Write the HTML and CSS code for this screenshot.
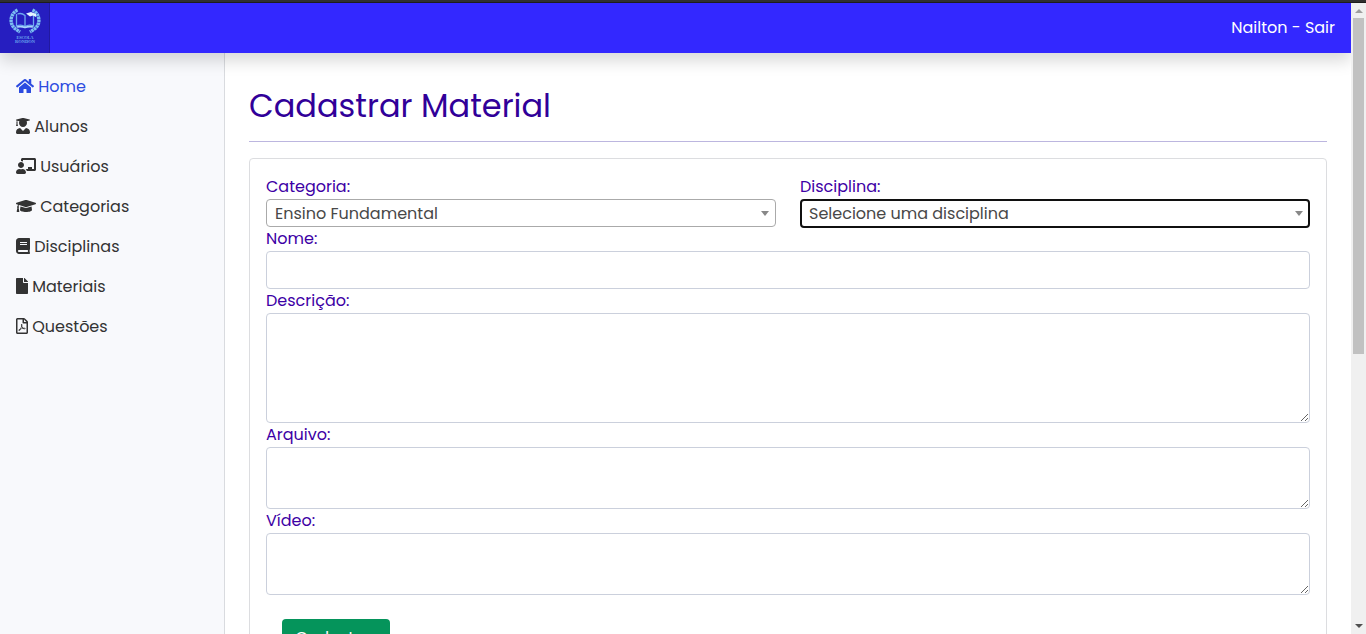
FILE: index.html
```html
<!DOCTYPE html>
<html lang="pt-BR">
<head>
<meta charset="utf-8">
<title>Cadastrar Material</title>
<link rel="stylesheet" href="styles.css">
</head>
<body>
<div class="page">
  <div class="window-edge"></div>
  <div class="app">
    <header class="navbar">
      <div class="brand">
        <svg width="34" height="37" viewBox="0 0 34 37">
          <g fill="none" stroke="#7cc0f2" stroke-width="3.400" stroke-dasharray="2.500 .5">
            <path d="M9.500 4C3 7 0 17 7.500 23L12 26"/>
            <path d="M24.500 4C31 7 34 17 26.500 23L22 26"/>
          </g>
          <path d="M8.500 8v12q5-2 8.500 .8q3.500-2.800 8.500-.8V8M17 9V20M9.500 8q4-1.500 7.500 1.500" fill="none" stroke="#6ea9ef" stroke-width="1.300"/>
          <path d="M9 21q4-1 8 .5q4-1.500 8-.5" fill="none" stroke="#a8d5fb" stroke-width="1.800"/>
          <path d="M18 7.500l5-1.500 5 2v3l-3-1.500-3 1z" fill="#e4f5ff"/>
          <text class="brand-text" x="17" y="33" text-anchor="middle" textLength="17">ESCOLA</text>
          <text class="brand-text" x="17" y="37" text-anchor="middle" textLength="20">RONDON</text>
        </svg>
      </div>
      <a class="account">Nailton - Sair</a>
    </header>
    <div class="columns">
      <nav class="sidebar">
        <a class="item active"><svg width="18" height="16" viewBox="0 0 576 512"><path d="M280.37 148.26L96 300.11V464a16 16 0 0 0 16 16l112.06-.29a16 16 0 0 0 15.92-16V368a16 16 0 0 1 16-16h64a16 16 0 0 1 16 16v95.64a16 16 0 0 0 16 16.05L464 480a16 16 0 0 0 16-16V300L295.67 148.26a12.19 12.19 0 0 0-15.3 0zM571.6 251.47L488 182.56V44.05a12 12 0 0 0-12-12h-56a12 12 0 0 0-12 12v72.61L318.47 43a48 48 0 0 0-61 0L4.34 251.47a12 12 0 0 0-1.6 16.9l25.5 31A12 12 0 0 0 45.15 301l235.22-193.74a12.19 12.19 0 0 1 15.3 0L530.9 301a12 12 0 0 0 16.9-1.6l25.5-31a12 12 0 0 0-1.7-16.93z"/></svg><span>Home</span></a>
        <a class="item"><svg width="14" height="16" viewBox="0 0 448 512"><path d="M319.4 320.6L224 416l-95.4-95.4C57.1 323.7 0 382.2 0 454.4v9.6c0 26.5 21.5 48 48 48h352c26.5 0 48-21.5 48-48v-9.6c0-72.2-57.1-130.7-128.6-133.8zM13.6 79.8l6.4 1.5v58.4c-7 4.2-12 11.5-12 20.3 0 8.4 4.6 15.4 11.1 19.7L3.5 242c-1.7 6.9 2.1 14 7.6 14h41.8c5.5 0 9.3-7.1 7.6-14l-15.6-62.3C51.4 175.4 56 168.4 56 160c0-8.8-5-16.1-12-20.3V87.1l66 15.9c-8.6 17.2-14 36.4-14 57 0 70.7 57.3 128 128 128s128-57.3 128-128c0-20.6-5.3-39.8-14-57l96.3-23.2c18.2-4.4 18.2-27.1 0-31.5l-190.4-46c-13-3.1-26.7-3.1-39.7 0L13.6 48.2c-18.1 4.4-18.1 27.2 0 31.6z"/></svg><span>Alunos</span></a>
        <a class="item"><svg width="20" height="16" viewBox="0 0 640 512"><path d="M208 352c-2.39 0-4.78.35-7.06 1.09C187.98 357.3 174.35 360 160 360c-14.35 0-27.98-2.7-40.95-6.91-2.28-.74-4.66-1.09-7.05-1.09C49.94 352-.33 402.48 0 464.62.14 490.88 21.73 512 48 512h224c26.27 0 47.86-21.12 48-47.38.33-62.14-49.94-112.62-112-112.62zm-48-32c53.02 0 96-42.98 96-96s-42.98-96-96-96-96 42.98-96 96 42.98 96 96 96zM592 0H208c-26.47 0-48 22.25-48 49.59V96c23.42 0 45.1 6.78 64 17.8V64h352v288h-64v-64H384v64h-76.24c19.1 16.69 33.12 38.73 39.69 64H592c26.47 0 48-22.25 48-49.59V49.59C640 22.25 618.47 0 592 0z"/></svg><span>Usuários</span></a>
        <a class="item"><svg width="20" height="16" viewBox="0 0 640 512"><path d="M622.34 153.2L343.4 67.5c-15.2-4.67-31.6-4.67-46.79 0L17.66 153.2c-23.54 7.23-23.54 38.36 0 45.59l48.63 14.94c-10.67 13.19-17.23 29.28-17.88 46.9C38.78 266.15 32 276.11 32 288c0 10.78 5.68 19.85 13.86 25.65L20.33 428.53C18.11 438.52 25.71 448 35.94 448h56.11c10.24 0 17.84-9.48 15.62-19.47L82.14 313.65C90.32 307.85 96 298.78 96 288c0-11.57-6.47-21.25-15.66-26.87.76-15.02 8.44-28.3 20.69-36.72L296.6 284.5c9.06 2.78 26.44 6.25 46.79 0l278.95-85.7c23.55-7.24 23.55-38.36 0-45.6zM352.79 315.09c-28.53 8.76-52.84 3.92-65.59 0l-145.02-44.55L128 384c0 35.35 85.96 64 192 64s192-28.65 192-64l-14.18-113.47-145.03 44.56z"/></svg><span>Categorias</span></a>
        <a class="item"><svg width="14" height="16" viewBox="0 0 448 512"><path d="M448 360V24c0-13.3-10.7-24-24-24H96C43 0 0 43 0 96v320c0 53 43 96 96 96h328c13.3 0 24-10.7 24-24v-16c0-7.500-3.500-14.300-8.900-18.700-4.200-15.400-4.200-59.300 0-74.700 5.400-4.300 8.900-11.100 8.900-18.600zM128 134c0-3.300 2.700-6 6-6h212c3.300 0 6 2.700 6 6v20c0 3.300-2.700 6-6 6H134c-3.300 0-6-2.700-6-6v-20zm0 64c0-3.300 2.700-6 6-6h212c3.300 0 6 2.700 6 6v20c0 3.300-2.700 6-6 6H134c-3.300 0-6-2.700-6-6v-20zm253.400 250H96c-17.700 0-32-14.300-32-32 0-17.600 14.400-32 32-32h285.400c-1.900 17.100-1.900 46.900 0 64z"/></svg><span>Disciplinas</span></a>
        <a class="item"><svg width="12" height="16" viewBox="0 0 384 512"><path d="M224 136V0H24C10.700 0 0 10.700 0 24v464c0 13.300 10.700 24 24 24h336c13.300 0 24-10.700 24-24V160H248c-13.200 0-24-10.800-24-24zm160-14.100v6.100H256V0h6.100c6.400 0 12.500 2.500 17 7l97.900 98c4.500 4.500 7 10.600 7 16.900z"/></svg><span>Materiais</span></a>
        <a class="item"><svg width="12" height="16" viewBox="0 0 384 512"><path d="M369.9 97.9L286 14C277 5 264.8-.1 252.1-.1H48C21.5 0 0 21.5 0 48v416c0 26.5 21.5 48 48 48h288c26.5 0 48-21.5 48-48V131.9c0-12.7-5.1-25-14.1-34zM332.1 128H256V51.9l76.1 76.1zM48 464V48h160v104c0 13.3 10.7 24 24 24h104v288H48zm250.2-143.7c-12.2-12-47-8.7-64.4-6.5-17.2-10.5-28.7-25-36.8-46.3 3.9-16.1 10.1-40.6 5.4-56-4.2-26.2-37.8-23.6-42.6-5.9-4.4 16.1-.4 38.5 7 67.1-10 23.9-24.9 56-35.4 74.4-20 10.3-47 26.2-51 46.2-3.3 15.8 26 55.2 76.1-31.2 22.4-7.4 46.8-16.5 68.4-20.1 18.9 10.2 41 17 55.8 17 25.5 0 28-28.2 17.5-38.7zm-198.1 77.8c5.1-13.7 24.5-29.5 30.4-35-19 30.3-30.4 35.7-30.4 35zm81.6-190.6c7.4 0 6.7 32.1 1.8 40.8-4.4-13.9-4.3-40.8-1.8-40.8zm-24.4 136.6c9.7-16.9 18-37 24.7-54.7 8.3 15.1 18.9 27.2 30.1 35.5-20.8 4.3-38.9 13.1-54.8 19.2zm131.6-5s-5 6-37.3-7.8c35.1-2.6 40.9 5.4 37.3 7.8z"/></svg><span>Questões</span></a>
      </nav>
      <main class="content">
        <h1 class="title">Cadastrar Material</h1>
        <form class="card">
          <div class="row">
            <div class="field">
              <label class="label">Categoria:</label>
              <div class="select"><span>Ensino Fundamental</span><i class="caret"></i></div>
            </div>
            <div class="field">
              <label class="label">Disciplina:</label>
              <div class="select focused"><span>Selecione uma disciplina</span><i class="caret"></i></div>
            </div>
          </div>
          <label class="label">Nome:</label>
          <input class="control" type="text">
          <label class="label">Descrição:</label>
          <textarea class="control tall"></textarea>
          <label class="label">Arquivo:</label>
          <textarea class="control short"></textarea>
          <label class="label">Vídeo:</label>
          <textarea class="control short"></textarea>
          <button class="submit" type="button">Cadastrar</button>
        </form>
      </main>
    </div>
  </div>
  <div class="scrollbar">
    <i class="arrow up"></i>
    <div class="thumb"></div>
    <i class="arrow down"></i>
  </div>
</div>
</body>
</html>
```
FILE: styles.css
```css
* { box-sizing: border-box; }
body {
  margin: 0;
  overflow: hidden;
  background: #fff;
  font: 16px/24px Poppins, Inter, "Open Sans", sans-serif;
}
.page {
  display: grid;
  grid-template: 3px 631px / 1351px 15px;
  height: 634px;
  overflow: hidden;
}
.window-edge { grid-column: 1 / 3; background: #303030; border-bottom: 1px solid #1d1d1d; }
.app { display: flex; flex-direction: column; overflow: hidden; }

.navbar {
  position: relative;
  z-index: 2;
  flex: none;
  display: flex;
  justify-content: space-between;
  align-items: center;
  height: 50px;
  padding-right: 16px;
  background: #3328ff;
  box-shadow: 0 8px 16px rgba(0, 0, 0, .15);
}
.brand {
  width: 50px;
  height: 50px;
  padding: 3px 0 0 8px;
  background: #261ec0;
  border-right: 1px solid #2119a0;
}
.brand svg { display: block; }
.brand-text { font: bold 4.500px "Liberation Serif", serif; fill: #69a5ed; }
.account { color: #fff; }

.columns { display: flex; flex: 1; min-height: 0; }
.sidebar {
  flex: none;
  width: 225px;
  padding-top: 13px;
  background: #f8f9fc;
  border-right: 1px solid #d9dbdf;
}
.item {
  display: flex;
  align-items: center;
  gap: 4.200px;
  height: 40px;
  padding-left: 16px;
  color: #333;
}
.item svg { flex: none; fill: currentColor; }
.item span { padding-top: 2px; }
.item.active { color: #2c4be0; }

.content { flex: 1; padding: 31px 24px 0; }
.title {
  height: 58px;
  margin: 0 0 16px;
  border-bottom: 1px solid #bcb6df;
  color: #310099;
  font-size: 32px;
  font-weight: 400;
  line-height: 44px;
}
.card {
  display: flex;
  flex-direction: column;
  height: 560px;
  padding: 16px;
  border: 1px solid #dcdde0;
  border-radius: 4px;
}
.row { display: grid; grid-template-columns: 1fr 1fr; gap: 24px; height: 52px; }
.label { display: block; flex: none; height: 24px; color: #3d00a5; }
.label, .select span { white-space: nowrap; }
.select {
  display: flex;
  justify-content: space-between;
  align-items: center;
  height: 28px;
  padding: 0 6px 0 8px;
  border: 1px solid #aaa;
  border-radius: 4px;
  color: #484848;
}
.select span { line-height: 26px; }
.select.focused { height: 29px; padding: 0 5px 0 7px; border: 2px solid #101010; }
.select.focused span { line-height: 24px; }
.select:not(.focused) span { padding-top: 1px; }
.caret { border: solid transparent; border-width: 5px 4px 0; border-top-color: #888; }
.control {
  display: block;
  flex: none;
  width: 100%;
  height: 38px;
  margin: 0;
  padding: 6px 12px;
  border: 1px solid #cbd0dc;
  border-radius: 4px;
  background: #fff;
  font: inherit;
}
.tall { height: 110px; }
.short { height: 62px; }
.submit {
  flex: none;
  width: 108px;
  height: 38px;
  margin: 24px 0 0 16px;
  padding: 0;
  border: 0;
  border-radius: 4px;
  background: #05945b;
  color: #fff;
  font: inherit;
}

.scrollbar {
  display: flex;
  flex-direction: column;
  align-items: center;
  padding-bottom: 6px;
  background: #f0f0f0;
}
.thumb { width: 11px; height: 336px; margin-top: 5px; background: #c1c1c1; }
.arrow { border: solid transparent; border-width: 0 4px; }
.up { margin-top: 6px; border-bottom: 4px solid #9e9e9e; }
.down { margin-top: auto; border-top: 4px solid #505050; }
```
